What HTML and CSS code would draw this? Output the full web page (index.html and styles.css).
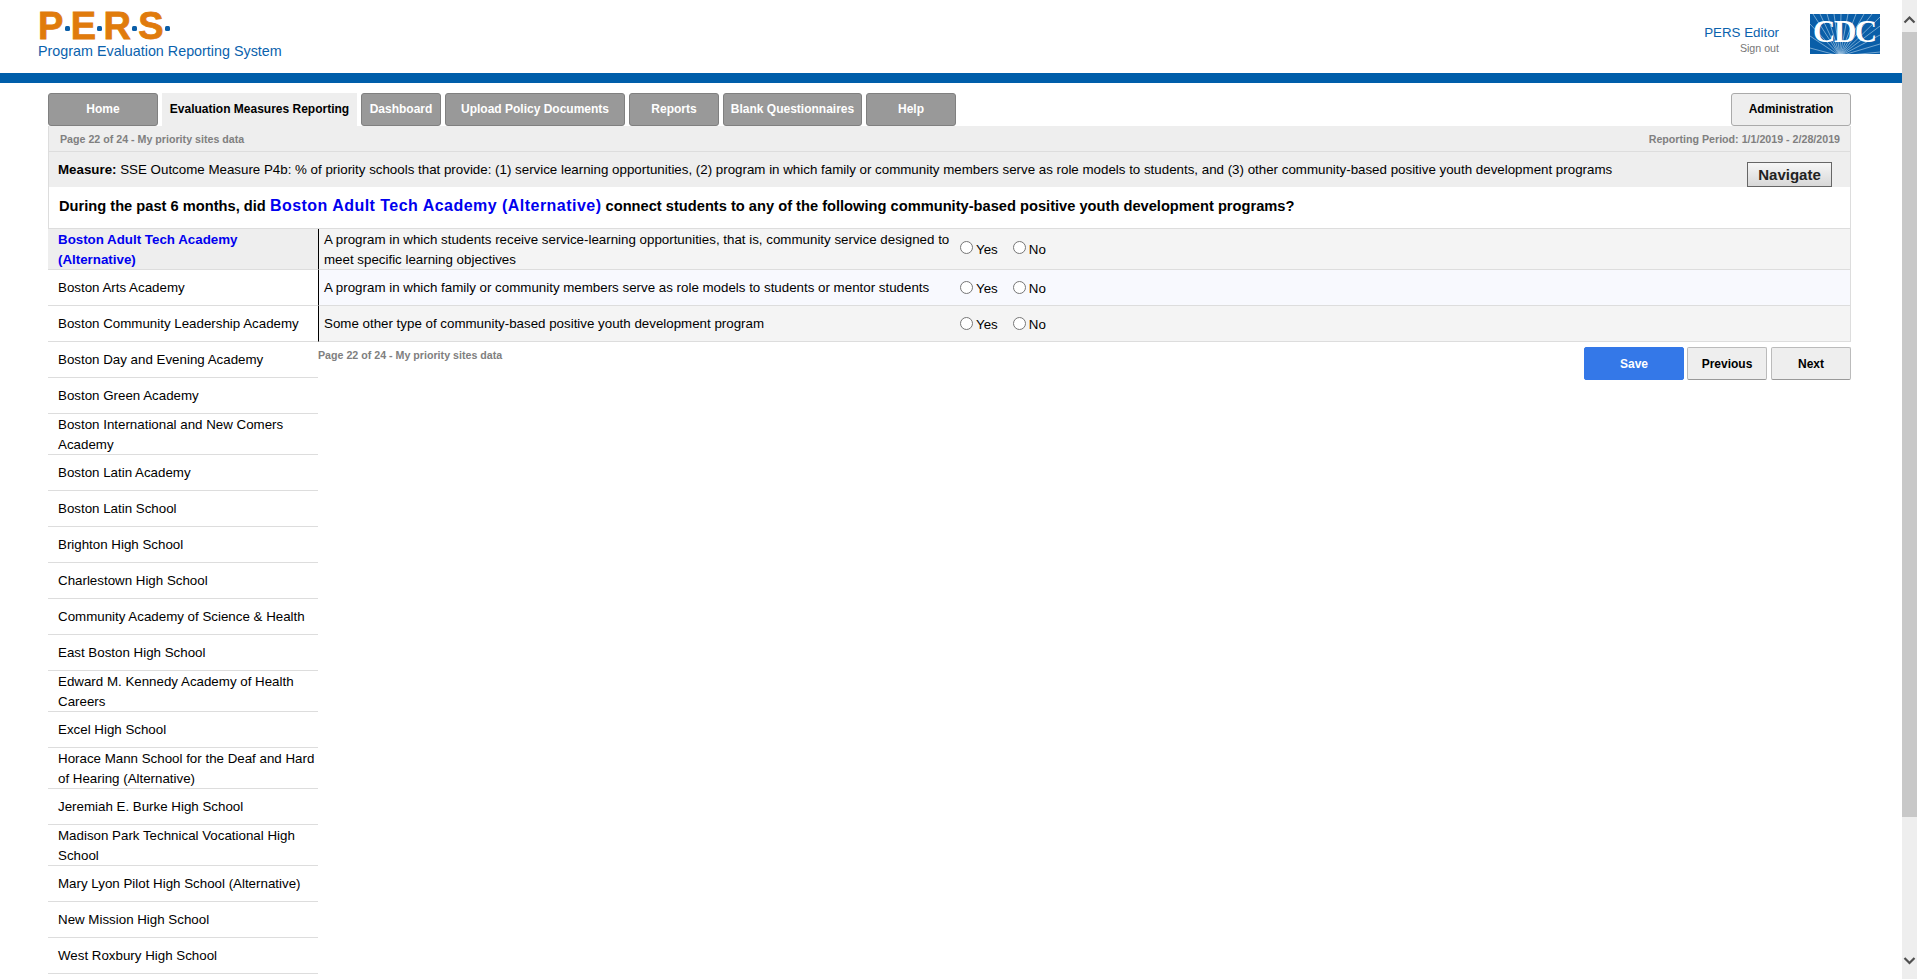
FILE: index.html
```html
<!DOCTYPE html>
<html lang="en">
<head>
<meta charset="utf-8">
<title>PERS</title>
<link rel="stylesheet" href="styles.css">
</head>
<body>
<div class="page">
  <header class="top">
    <div class="logo">
      <div class="logo-mark"><span>P</span><i></i><span>E</span><i></i><span>R</span><i></i><span>S</span><i></i></div>
      <div class="logo-sub">Program Evaluation Reporting System</div>
    </div>
    <div class="user">
      <div class="user-name">PERS Editor</div>
      <div class="user-out">Sign out</div>
    </div>
    <div class="cdc">
      <svg width="70" height="40" viewBox="0 0 70 40">
        <rect width="70" height="40" fill="#0a5ea8"/>
        <g stroke="#bcd6ec" stroke-width="0.6">
          <path d="M30 42L3 0M30 42L10 0M30 42L17 0M30 42L24 0M30 42L31 0M30 42L38 0M30 42L46 0M30 42L54 0M30 42L62 0M30 42L70 3M30 42L70 12M30 42L70 21M30 42L70 30M30 42L70 38M30 42L0 10M30 42L0 22M30 42L0 34"/>
        </g>
        <text x="3" y="28" class="cdc-text">CDC</text>
      </svg>
    </div>
  </header>
  <div class="rule"></div>
  <main class="wrap">
    <nav class="tabs">
      <a class="tab w-home">Home</a>
      <a class="tab active">Evaluation Measures Reporting</a>
      <a class="tab w-dash">Dashboard</a>
      <a class="tab w-up">Upload Policy Documents</a>
      <a class="tab w-rep">Reports</a>
      <a class="tab w-blank">Blank Questionnaires</a>
      <a class="tab w-help">Help</a>
      <a class="tab admin">Administration</a>
    </nav>
    <div class="status"><span>Page 22 of 24 - My priority sites data</span><span>Reporting Period: 1/1/2019 - 2/28/2019</span></div>
    <div class="measure">
      <div><b>Measure:</b> SSE Outcome Measure P4b: % of priority schools that provide: (1) service learning opportunities, (2) program in which family or community members serve as role models to students, and (3) other community-based positive youth development programs</div>
      <button class="navigate">Navigate</button>
    </div>
    <h1 class="question">During the past 6 months, did <em>Boston Adult Tech Academy (Alternative)</em> connect students to any of the following community-based positive youth development programs?</h1>
    <div class="body">
      <ul class="sites">
        <li class="current h41">Boston Adult Tech Academy (Alternative)</li>
        <li class="h36">Boston Arts Academy</li>
        <li class="h36">Boston Community Leadership Academy</li>
        <li class="h36">Boston Day and Evening Academy</li>
        <li class="h36">Boston Green Academy</li>
        <li class="h41">Boston International and New Comers Academy</li>
        <li class="h36">Boston Latin Academy</li>
        <li class="h36">Boston Latin School</li>
        <li class="h36">Brighton High School</li>
        <li class="h36">Charlestown High School</li>
        <li class="h36">Community Academy of Science &amp; Health</li>
        <li class="h36">East Boston High School</li>
        <li class="h41">Edward M. Kennedy Academy of Health Careers</li>
        <li class="h36">Excel High School</li>
        <li class="h41">Horace Mann School for the Deaf and Hard of Hearing (Alternative)</li>
        <li class="h36">Jeremiah E. Burke High School</li>
        <li class="h41">Madison Park Technical Vocational High School</li>
        <li class="h36">Mary Lyon Pilot High School (Alternative)</li>
        <li class="h36">New Mission High School</li>
        <li class="h36">West Roxbury High School</li>
      </ul>
      <section class="content">
        <div class="qrow h41 odd">
          <div class="qtext">A program in which students receive service-learning opportunities, that is, community service designed to meet specific learning objectives</div>
          <div class="answers"><label><span class="radio"></span>Yes</label><label><span class="radio"></span>No</label></div>
        </div>
        <div class="qrow h36 even">
          <div class="qtext">A program in which family or community members serve as role models to students or mentor students</div>
          <div class="answers"><label><span class="radio"></span>Yes</label><label><span class="radio"></span>No</label></div>
        </div>
        <div class="qrow h36 odd">
          <div class="qtext">Some other type of community-based positive youth development program</div>
          <div class="answers"><label><span class="radio"></span>Yes</label><label><span class="radio"></span>No</label></div>
        </div>
        <div class="foot">
          <span class="pageinfo">Page 22 of 24 - My priority sites data</span>
          <div class="actions">
            <button class="btn save">Save</button>
            <button class="btn prev">Previous</button>
            <button class="btn next">Next</button>
          </div>
        </div>
      </section>
    </div>
  </main>
</div>
<div class="scrollbar">
  <svg class="arrow-up" width="15" height="12" viewBox="0 0 15 12"><path d="M2.5 9.5L7.5 4.5L12.5 9.5" fill="none" stroke="#505050" stroke-width="2.2"/></svg>
  <div class="thumb"></div>
  <svg class="arrow-down" width="15" height="12" viewBox="0 0 15 12"><path d="M2.5 3L7.5 8L12.5 3" fill="none" stroke="#505050" stroke-width="2.2"/></svg>
</div>
</body>
</html>
```
FILE: styles.css
```css
* { box-sizing: border-box; }
html, body { margin: 0; height: 100%; overflow: hidden; background: #fff; }
body { font-family: "Liberation Sans", Arial, sans-serif; font-size: 13.33px; color: #000; }
.page { width: 1902px; height: 979px; overflow: hidden; }
.top { height: 73px; display: flex; align-items: flex-start; padding: 12px 22px 0 38px; }
.logo { flex: 1; }
.logo-mark { display: flex; align-items: center; height: 28px; color: #e07b0c; font-weight: bold; font-size: 38px; line-height: 28px; -webkit-text-stroke: 0.8px #e07b0c; }
.logo-mark i { width: 5px; height: 5px; background: #0a5ea8; border-radius: 1.5px; margin: 4px 1.2px 0 1.2px; }
.logo-sub { color: #0a62ad; font-size: 14.33px; margin-top: 2px; line-height: 18px; }
.user { text-align: right; margin-right: 31px; padding-top: 13px; }
.user-name { color: #0a62ad; font-size: 13.33px; line-height: 16px; }
.user-out { color: #777; font-size: 10.67px; line-height: 13px; margin-top: 1px; }
.cdc { width: 70px; height: 40px; margin-top: 2px; }
.cdc-text { font-family: "Liberation Serif", serif; font-size: 31px; font-weight: bold; fill: #fff; letter-spacing: -1.5px; }
.rule { height: 10px; background: #005eaa; }
.wrap { margin: 10px 0 0 48px; width: 1803px; }
.tabs { display: flex; gap: 4px; height: 33px; }
.tab { display: flex; align-items: center; justify-content: center; background: #999; color: #fff; font-weight: bold; font-size: 12px; border: 1px solid #808080; border-radius: 3px; height: 33px; padding-bottom: 2px; }
.w-home { width: 110px; }
.tab.active { width: 195px; background: #eee; color: #000; border: 0; border-radius: 0; }
.w-dash { width: 80px; }
.w-up { width: 180px; }
.w-rep { width: 90px; }
.w-blank { width: 139px; }
.w-help { width: 90px; }
.tab.admin { margin-left: auto; width: 120px; background: #eee; color: #000; border-color: #aaa; }
.status { display: flex; justify-content: space-between; height: 26px; align-items: center; padding: 0 10px 0 11px; background: #eee; color: #808080; font-size: 10.67px; font-weight: bold; border-left: 1px solid #ddd; border-right: 1px solid #ddd; border-bottom: 1px solid #ddd; }
.measure { display: flex; justify-content: space-between; height: 35px; padding: 0 18px 0 9px; align-items: center; background: #eee; border-left: 1px solid #ddd; border-right: 1px solid #ddd; }
.navigate { width: 85px; height: 25px; align-self: flex-end; font: bold 15px "Liberation Sans", sans-serif; color: #222; border: 1px solid #666; background: linear-gradient(#f6f6f6, #d8d8d8); padding: 0; }
.question { margin: 0; height: 41px; padding: 9px 10px 0; font-size: 14.67px; line-height: 19px; font-weight: bold; border-left: 1px solid #ddd; border-right: 1px solid #ddd; }
.question em { font-style: normal; color: #0000ee; font-size: 16px; letter-spacing: 0.47px; }
.body { display: flex; align-items: flex-start; }
.sites { list-style: none; margin: 0; padding: 0; width: 270px; flex: none; border-top: 1px solid #ddd; }
.sites li { display: flex; align-items: center; padding: 0 0 0 10px; line-height: 20px; border-bottom: 1px solid #ddd; }
.sites li.h41 { padding-top: 2px; }
.h41 { height: 41px; }
.h36 { height: 36px; }
.sites .current { background: #eee; color: #0000ee; font-weight: bold; padding-right: 30px; }
.content { flex: 1; border-top: 1px solid #ddd; }
.qrow { display: flex; align-items: center; border-bottom: 1px solid #ddd; border-left: 1px solid #000; border-right: 1px solid #ddd; }
.odd { background: #f4f4f4; }
.even { background: #f8f9fe; }
.qtext { width: 632px; padding-left: 5px; line-height: 20px; }
.qrow.h41 .qtext { padding-top: 2px; }
.answers { display: flex; gap: 15px; padding-left: 9px; margin-top: 2px; }
.qrow.h41 .answers { margin-top: 0; }
.answers label { display: flex; align-items: center; }
.radio { width: 13px; height: 13px; border: 1px solid #767676; border-radius: 50%; background: #fff; margin-right: 3px; margin-top: -3px; }
.foot { display: flex; justify-content: space-between; align-items: flex-start; padding-top: 5px; }
.pageinfo { color: #808080; font-size: 10.67px; font-weight: bold; margin-top: 2px; }
.actions { display: flex; gap: 4px; }
.btn { height: 33px; font: bold 12px "Liberation Sans", sans-serif; border-radius: 2px; padding: 0; background: #eee; border: 1px solid #bbb; border-bottom-color: #999; color: #000; }
.save { width: 100px; background: #3478e8; border-color: #3478e8; color: #fff; margin-right: -1px; }
.prev { width: 80px; }
.next { width: 80px; }
.scrollbar { position: fixed; right: 0; top: 0; width: 15px; height: 979px; background: #eee; }
.arrow-up { position: absolute; top: 13px; left: 0; }
.arrow-down { position: absolute; bottom: 12px; left: 0; }
.thumb { position: absolute; top: 32px; left: 0; width: 15px; height: 785px; background: #c8c8c8; }
```
